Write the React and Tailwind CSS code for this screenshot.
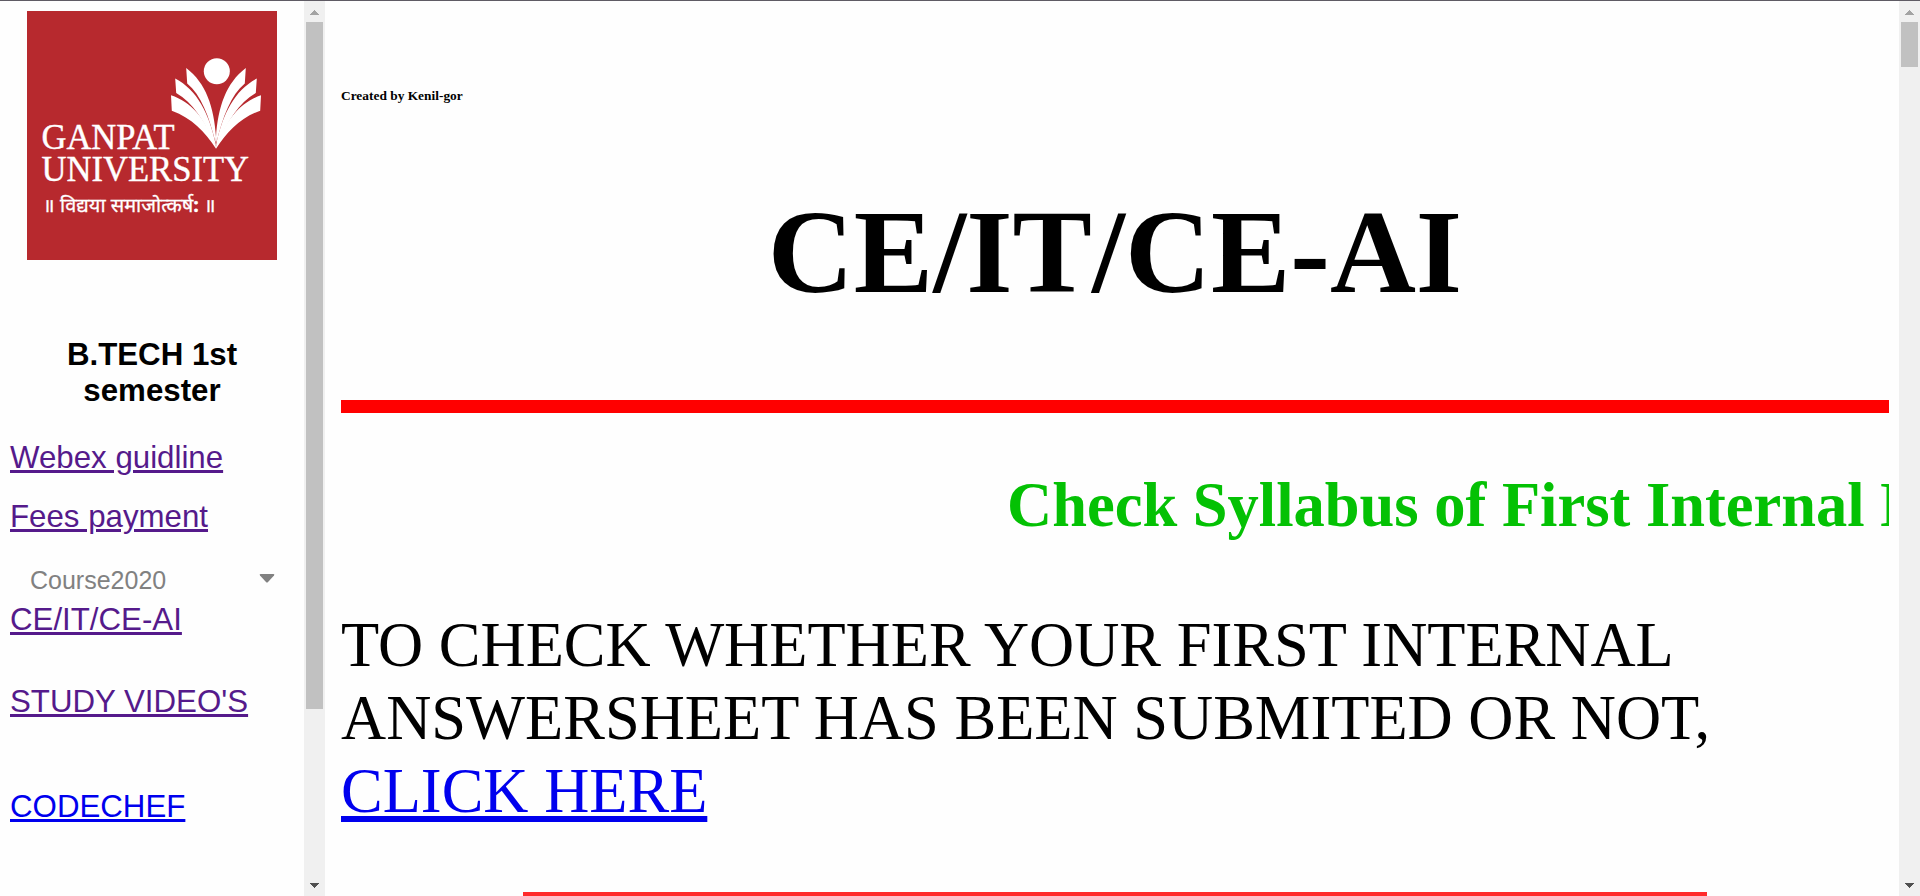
const ARIAL = "font-['Liberation_Sans',Arial,sans-serif]";
const TIMES = "font-['Liberation_Serif','Times_New_Roman',serif]";

function Logo() {
  return (
    <svg className="ml-[27px] block h-[249px] w-[250px]" viewBox="27 11 250 249" preserveAspectRatio="none">
      <rect x="27" y="11" width="250" height="249" fill="#b7292e" />
      <g fill="#fff">
        <circle cx="216.8" cy="71.3" r="13" />
        <path d="M186.2 68 C206 83 214 107 216 137 L215.700 143 C209 116 201 95 187.200 83.500 Z" />
        <path d="M245.8 68 C226 83 218 107 216 137 L216.300 143 C223 116 231 95 244.800 83.500 Z" />
        <path d="M175.200 78.500 C197 90 209 113 215.700 144 L215.500 146 C204 120 193 103 176.200 93 Z" />
        <path d="M256.800 78.500 C235 90 223 113 216.300 144 L216.500 146 C228 120 239 103 255.800 93 Z" />
        <path d="M171 95.300 C191 102 205 118 215.900 146 L216 148.700 C205 132 192 118 171.800 110.700 Z" />
        <path d="M261 95.300 C241 102 227 118 216.100 146 L216 148.700 C227 132 240 118 260.200 110.700 Z" />
      </g>
      <g fill="#fff" stroke="#fff" strokeWidth="0.4" fontFamily="'Liberation Serif', serif" fontSize="36">
        <text x="41.500" y="148.500" textLength="133" lengthAdjust="spacingAndGlyphs">GANPAT</text>
        <text x="41.500" y="181" textLength="207.500" lengthAdjust="spacingAndGlyphs">UNIVERSITY</text>
      </g>
      <text x="43" y="211.500" fill="#fff" stroke="#fff" strokeWidth="0.3" fontFamily="'Noto Sans', sans-serif" fontSize="19" textLength="173" lengthAdjust="spacingAndGlyphs">
        ॥ विद्यया समाजोत्कर्ष<tspan fontWeight="700">:</tspan> ॥
      </text>
    </svg>
  );
}

function Scrollbar({ thumb }) {
  return (
    <div className="flex w-[21px] shrink-0 flex-col items-center bg-[#f0f0f0]">
      <svg className="h-[21px] w-[21px] shrink-0" viewBox="0 0 21 21" shapeRendering="crispEdges">
        <path d="M6 14 L10.500 9 L15 14 Z" fill="#a3a3a3" />
      </svg>
      <div className={`w-[17px] shrink-0 bg-[#c1c1c1] ${thumb}`} />
      <svg className="mt-auto h-[21px] w-[21px] shrink-0" viewBox="0 0 21 21" shapeRendering="crispEdges">
        <path d="M6 8 H15 L10.500 13 Z" fill="#505050" />
      </svg>
    </div>
  );
}

function SideLink({ className, children }) {
  return (
    <a
      href="#"
      className={`ml-[10px] block w-fit text-[31.25px] leading-[36px] whitespace-nowrap underline decoration-[3px] underline-offset-[2px] ${className}`}
    >
      {children}
    </a>
  );
}

export default function App() {
  return (
    <div className="flex h-[896px] w-[1920px] overflow-hidden border-t border-[#5f5b64] bg-[#fefefe] text-black">
      <aside className={`w-[304px] shrink-0 overflow-hidden pt-[10px] ${ARIAL}`}>
        <Logo />
        <h3 className="mx-[10px] mt-[77px] text-center text-[31.25px] leading-[36px] font-bold">
          B.TECH 1st
          <br />
          semester
        </h3>
        <SideLink className="mt-[31px] text-[#551a8b]">Webex guidline</SideLink>
        <SideLink className="mt-[23px] text-[#551a8b]">Fees payment</SideLink>
        <button className="mt-[31px] flex h-[28px] w-full items-center justify-between pr-[29px] pl-[30px] text-[25px] leading-[28px] text-[#818181]">
          <span>Course2020</span>
          <svg className="mb-[3px] h-[9px] w-[16px]" viewBox="0 0 16 9">
            <path d="M1.500 0 H14.500 Q16 0.300 15 1.500 L9 8 Q8 9 7 8 L1 1.500 Q0 0.300 1.500 0 Z" fill="#818181" />
          </svg>
        </button>
        <SideLink className="mt-[8px] text-[#551a8b]">CE/IT/CE-AI</SideLink>
        <SideLink className="mt-[46px] text-[#551a8b]">STUDY VIDEO'S</SideLink>
        <SideLink className="mt-[69px] text-[#0000ee]">CODECHEF</SideLink>
      </aside>
      <Scrollbar thumb="h-[687px]" />
      <main className={`min-w-0 flex-1 overflow-hidden pr-[10px] pl-[16px] ${TIMES}`}>
        <h6 className="mt-[87px] text-[13.4px] leading-[15px] font-bold">Created by Kenil-gor</h6>
        <h1 className="mt-[80px] text-center text-[119px] leading-[138px] font-bold">CE/IT/CE-AI</h1>
        <div className="mt-[79px] h-[13px] bg-[#ff0000]" />
        <div className="mt-[56px] overflow-hidden pl-[666px] text-[62.5px] leading-[73px] font-bold whitespace-nowrap text-[#04c104]">
          Check Syllabus of First Internal Exam
        </div>
        <p className="mt-[67px] text-[62.5px] leading-[73px]">
          TO CHECK WHETHER YOUR FIRST INTERNAL
          <br />
          ANSWERSHEET HAS BEEN SUBMITED OR NOT,
          <br />
          <a href="#" className="text-[#0000ee] underline decoration-[6px] underline-offset-[4px]">CLICK HERE</a>
        </p>
        <div className="mt-[64px] ml-[182px] h-[13px] w-[1184px] bg-[#ff2a2a]" />
      </main>
      <Scrollbar thumb="h-[45px]" />
    </div>
  );
}
